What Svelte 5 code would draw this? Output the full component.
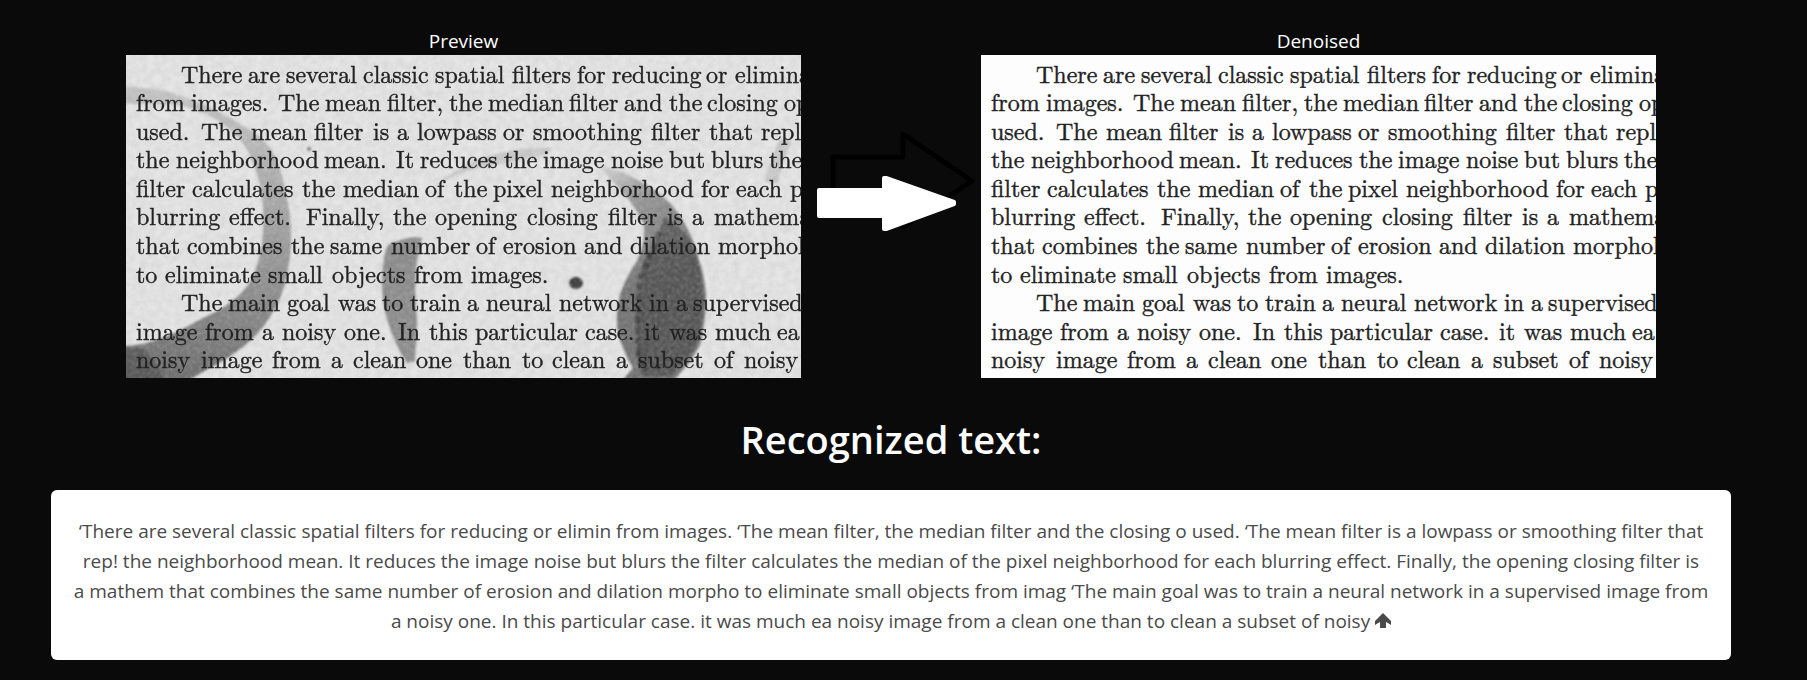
<script>
  // Each line of the scanned page: baseline, then the words with their starting x.
  const lines = [
    [28, 'There', 55, 'are', 122, 'several', 160, 'classic', 237, 'spatial', 309, 'filters', 386, 'for', 451, 'reducing', 486, 'or', 580, 'elimina', 609],
    [56, 'from', 10, 'images.', 65, 'The', 152, 'mean', 199, 'filter,', 261, 'the', 323, 'median', 362, 'filter', 443, 'and', 498, 'the', 543, 'closing', 581, 'op', 658],
    [85, 'used.', 10, 'The', 75, 'mean', 125, 'filter', 188, 'is', 247, 'a', 271, 'lowpass', 291, 'or', 377, 'smoothing', 407, 'filter', 525, 'that', 583, 'repl', 635],
    [113, 'the', 10, 'neighborhood', 50, 'mean.', 198, 'It', 270, 'reduces', 294, 'the', 378, 'image', 417, 'noise', 485, 'but', 543, 'blurs', 585, 'the', 643],
    [142, 'filter', 10, 'calculates', 66, 'the', 176, 'median', 217, 'of', 299, 'the', 328, 'pixel', 367, 'neighborhood', 425, 'for', 575, 'each', 610, 'p', 664],
    [170, 'blurring', 10, 'effect.', 103, 'Finally,', 180, 'the', 267, 'opening', 309, 'closing', 401, 'filter', 482, 'is', 541, 'a', 566, 'mathema', 588],
    [199, 'that', 10, 'combines', 61, 'the', 165, 'same', 204, 'number', 265, 'of', 350, 'erosion', 377, 'and', 458, 'dilation', 504, 'morphol', 592],
    [228, 'to', 10, 'eliminate', 39, 'small', 142, 'objects', 206, 'from', 288, 'images.', 345],
    [256, 'The', 55, 'main', 102, 'goal', 161, 'was', 212, 'to', 256, 'train', 284, 'a', 341, 'neural', 360, 'network', 433, 'in', 523, 'a', 550, 'supervised', 567],
    [285, 'image', 10, 'from', 79, 'a', 136, 'noisy', 156, 'one.', 218, 'In', 272, 'this', 303, 'particular', 349, 'case.', 459, 'it', 518, 'was', 543, 'much', 589, 'ea', 651],
    [313, 'noisy', 10, 'image', 75, 'from', 146, 'a', 205, 'clean', 227, 'one', 290, 'than', 337, 'to', 396, 'clean', 426, 'a', 490, 'subset', 512, 'of', 588, 'noisy', 618]
  ].map(([y, ...rest]) => ({
    y,
    words: rest.filter((_, i) => i % 2 === 0).map((text, i) => ({ text, x: rest[i * 2 + 1] }))
  }));
</script>

{#snippet scan()}
  <g class="scan-text">
    {#each lines as line}
      <text y={line.y}>{#each line.words as word}<tspan x={word.x}>{word.text}</tspan>{' '}{/each}</text>
    {/each}
  </g>
{/snippet}

<main>
  <section class="compare">
    <figure>
      <figcaption>Preview</figcaption>
      <svg viewBox="0 0 675 323" role="img" aria-label="Preview">
        <defs>
          <filter id="paper" x="0" y="0" width="100%" height="100%" color-interpolation-filters="sRGB">
            <feTurbulence type="fractalNoise" baseFrequency="0.14" numOctaves="3" seed="4" />
            <feColorMatrix values="0.08 0 0 0 0.84  0.08 0 0 0 0.84  0.08 0 0 0 0.84  0 0 0 0 1" />
          </filter>
          <filter id="stain" x="-5%" y="-5%" width="110%" height="110%">
            <feTurbulence type="fractalNoise" baseFrequency="0.45" numOctaves="2" seed="9" result="n" />
            <feColorMatrix in="n" values="0 0 0 0 0  0 0 0 0 0  0 0 0 0 0  1.1 0 0 0 0.35" result="grain" />
            <feComposite in="SourceGraphic" in2="grain" operator="in" result="g" />
            <feGaussianBlur in="g" stdDeviation="0.8" />
          </filter>
          <linearGradient id="ring" gradientUnits="userSpaceOnUse" x1="60" y1="35" x2="20" y2="323">
            <stop offset="0" stop-color="#444" stop-opacity=".2" />
            <stop offset=".3" stop-color="#444" stop-opacity=".38" />
            <stop offset=".7" stop-color="#3a3a3a" stop-opacity=".56" />
            <stop offset="1" stop-color="#333" stop-opacity=".72" />
          </linearGradient>
          <linearGradient id="drop" gradientUnits="userSpaceOnUse" x1="480" y1="112" x2="535" y2="220">
            <stop offset="0" stop-color="#333" stop-opacity=".12" />
            <stop offset=".35" stop-color="#333" stop-opacity=".46" />
            <stop offset="1" stop-color="#2a2a2a" stop-opacity=".64" />
          </linearGradient>
        </defs>
        <rect width="675" height="323" filter="url(#paper)" />
        <g filter="url(#stain)">
          <path fill="url(#ring)" d="M-6 32C30 31 50 38 82 51Q104 62 124 75C146 88 155 108 159 135Q166 160 165 190Q162 235 145 260C132 283 108 301 80 315L60 327H-6V291C20 292 48 280 75 264Q112 248 126 224Q140 192 137 150Q134 115 117 88Q94 60 58 51Q30 48 -6 49Z" />
          <path fill="#222" opacity=".35" d="M-6 293H14Q30 300 38 327H-6Z" />
          <path fill="#3a3a3a" opacity=".54" d="M262 190Q275 184 288 182L296 183Q291 202 290 215Q288 240 291 265L289 306L281 308Q268 288 261 264Q254 240 257 212Q258 198 262 190Z" />
          <path fill="url(#drop)" d="M474 112Q492 114 510 124Q530 134 545 149C560 167 568 185 573 205Q581 228 580 252Q577 277 574 290Q563 310 546 327H495L507 313Q497 296 492 278Q489 260 494 240Q500 222 511 206C518 192 519 180 518 169Q510 152 492 132Q482 122 474 112Z" />
          <path fill="#1c1c1c" opacity=".4" d="M538 162Q563 175 571 203Q578 230 577 255Q575 283 566 297L545 321H517Q508 303 512 280Q508 250 516 225Q514 202 528 192Z" />
          <path fill="none" stroke="#111" stroke-width="5" opacity=".4" stroke-dasharray="7 4" d="M533 177L522 207L514 222L511 250L512 300L520 316" />
          <ellipse cx="450" cy="228" rx="7" ry="6" fill="#333" />
          <circle cx="183" cy="94" r="2" fill="#444" opacity=".7" />
          <path fill="#555" opacity=".2" d="M310 131Q330 111 363 101Q395 91 427 93L421 99Q393 105 370 110Q335 114 310 131Z" />
          <path fill="#555" opacity=".2" d="M654 84L666 86Q656 106 652 128L639 127Q643 106 654 84Z" />
        </g>
        {@render scan()}
      </svg>
    </figure>

    <svg class="arrow" viewBox="0 0 180 150" aria-hidden="true">
      <path d="M32 47H102V24L171 71L102 117V95H32Z" fill="none" stroke="#000" stroke-width="5" stroke-linejoin="round" />
      <path d="M18 80H83V68H85L153 92V94L85 119H83V106H18Z" fill="#fff" stroke="#fff" stroke-width="4" stroke-linejoin="round" />
    </svg>

    <figure>
      <figcaption>Denoised</figcaption>
      <svg viewBox="0 0 675 323" role="img" aria-label="Denoised">
        <rect width="675" height="323" fill="#fdfdfd" />
        {@render scan()}
      </svg>
    </figure>
  </section>

  <h1>Recognized text:</h1>

  <p class="box">
    ‘There are several classic spatial filters for reducing or elimin from images. ‘The mean filter, the median filter and the closing o used. ‘The mean filter is a lowpass or smoothing filter that
    rep! the neighborhood mean. It reduces the image noise but blurs the filter calculates the median of the pixel neighborhood for each blurring effect. Finally, the opening closing filter is
    a&nbsp;mathem that combines the same number of erosion and dilation morpho to eliminate small objects from imag ‘The main goal was to train a neural network in a supervised image from
    a noisy one. In this particular case. it was much ea noisy image from a clean one than to clean a subset of noisy
    <svg class="up" viewBox="0 0 16 15" aria-hidden="true"><path d="M8 0L16 8V12Q13 10 11 9V15H5V9Q3 10 0 12V8Z" fill="currentColor" /></svg>
  </p>
</main>

<style>
  :global(body) {
    margin: 0;
    background: #0a0a0a;
  }
  main {
    padding: 27px 76px 20px 51px;
    color: #fff;
    font: 19px/30px "Segoe UI", "Open Sans", sans-serif;
    text-align: center;
  }
  .compare {
    display: grid;
    grid-template-columns: minmax(0, 1fr) 180px minmax(0, 1fr);
    padding: 0 75px;
  }
  figure {
    margin: 0;
  }
  figcaption {
    line-height: 28px;
  }
  figure svg {
    display: block;
    width: 100%;
    overflow: hidden;
  }
  .scan-text {
    font: 24px "Latin Modern Roman", "Liberation Serif", serif;
    fill: #222;
    stroke: #222;
    stroke-width: 0.4px;
  }
  .arrow {
    width: 180px;
    margin-top: 83px;
  }
  h1 {
    margin: 38px 0 28px;
    font-size: 38px;
    line-height: 46px;
    font-weight: 600;
  }
  .box {
    margin: 0;
    padding: 26px 22px 24px;
    border-radius: 6px;
    background: #fff;
    color: #4a4a4a;
  }
  .up {
    width: 16px;
    height: 15px;
  }
</style>
